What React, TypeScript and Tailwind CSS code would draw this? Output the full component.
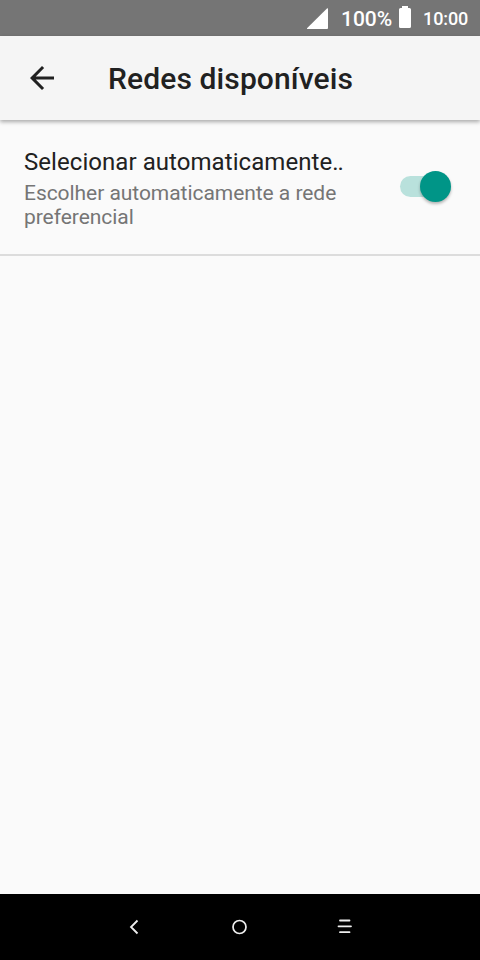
function StatusBar() {
  return (
    <div className="flex h-9 shrink-0 items-center justify-end bg-[#757575] text-white">
      <svg className="h-[21px] w-[21px]" viewBox="0 0 21 21" fill="currentColor">
        <path d="M0 20.2 20.2.3Q21 0 21 1V20Q21 21 20 21H.5Q-.3 21 0 20.2Z" />
      </svg>
      <span className="ml-[13px] w-[52px] whitespace-nowrap pt-[2px] text-[21px] leading-9 font-medium">100%</span>
      <svg className="mr-[12px] ml-[6px] -mt-[2px] h-[22px] w-[12px]" viewBox="0 0 12 22" fill="currentColor">
        <path d="M3 0H9V2H10.5Q12 2 12 3.5V20.5Q12 22 10.5 22H1.5Q0 22 0 20.5V3.5Q0 2 1.5 2H3Z" />
      </svg>
      <span className="mr-3 w-[45px] whitespace-nowrap pt-[2px] text-[18px] leading-9 font-medium tracking-[-0.1px]">10:00</span>
    </div>
  );
}

function AppBar() {
  return (
    <header className="z-10 flex h-21 shrink-0 items-center bg-[#f5f5f5] pl-6 text-[#212121] shadow-[0_2px_4px_rgba(0,0,0,0.32)]">
      <button type="button" aria-label="Voltar" className="h-9 w-9">
        <svg className="h-9 w-9" viewBox="0 0 24 24" fill="currentColor">
          <path d="M20 11H7.83l5.59-5.59L12 4l-8 8 8 8 1.41-1.41L7.83 13H20v-2z" />
        </svg>
      </button>
      <h1 className="ml-12 pt-[2px] text-[30px] leading-9 font-medium tracking-[0.12px] whitespace-nowrap">Redes disponíveis</h1>
    </header>
  );
}

function Switch() {
  return (
    <div role="switch" aria-checked="true" className="mb-[2px] flex h-[31px] w-[51px] items-center">
      <div className="flex h-[21px] w-[46px] items-center rounded-full bg-[#b9e1dc] pl-5">
        <div className="h-[31px] w-[31px] shrink-0 rounded-full bg-[#009587] shadow-[0_2px_3px_rgba(0,0,0,0.28)]" />
      </div>
    </div>
  );
}

export default function App() {
  return (
    <div className="flex h-[960px] w-[480px] flex-col overflow-hidden bg-[#fafafa] font-[Roboto,sans-serif]">
      <StatusBar />
      <AppBar />
      <main className="flex-1">
        <div className="flex h-34 items-center justify-between border-b-2 border-[#dcdcdc] pr-[29px] pl-6">
          <div className="w-[330px] pt-[2px]">
            <div className="text-[24px] leading-7 tracking-[0.06px] whitespace-nowrap text-[#212121]">
              Selecionar automaticamente<span className="tracking-[-1px]">..</span>
            </div>
            <div className="mt-[5px] text-[21px] leading-6 tracking-[-0.05px] text-[#757575]">Escolher automaticamente a rede preferencial</div>
          </div>
          <Switch />
        </div>
      </main>
      <nav className="flex h-[66px] shrink-0 items-center justify-center bg-black">
        <div className="flex w-[105px] justify-center pr-[2px]">
          <svg className="h-4 w-4" viewBox="0 0 16 16" fill="none" stroke="#eee" strokeWidth="1.8">
            <path d="M11.5 1.5 5 8l6.500 6.500" />
          </svg>
        </div>
        <div className="flex w-[105px] justify-center">
          <svg className="h-4 w-4" viewBox="0 0 16 16" fill="none" stroke="#eee" strokeWidth="1.7">
            <circle cx="7.500" cy="8" r="6.500" />
          </svg>
        </div>
        <div className="flex w-[105px] justify-center">
          <svg className="h-4 w-4" viewBox="0 0 16 16" fill="none" stroke="#eee" strokeWidth="1.8" strokeLinecap="round">
            <path d="M3 1.500H12.500M1.500 7.300H14M3 13.200H12.500" />
          </svg>
        </div>
      </nav>
    </div>
  );
}
